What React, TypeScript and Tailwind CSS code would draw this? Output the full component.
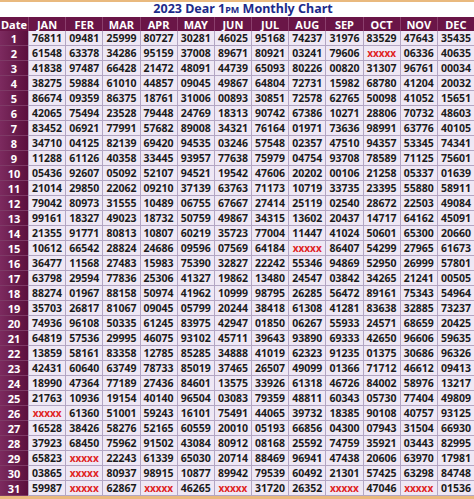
const months = ['JAN', 'FER', 'MAR', 'APR', 'MAY', 'JUN', 'JUL', 'AUG', 'SEP', 'OCT', 'NOV', 'DEC']

const rows = [
  '76811 09481 25999 80727 30281 46025 95168 74237 31976 83529 47643 35435',
  '61548 63378 34286 95159 37008 89671 80921 03241 79606 xxxxx 06336 40635',
  '41838 97487 66428 21472 48091 44739 65093 80226 00820 31307 96761 00034',
  '38275 59884 61010 44857 09045 49867 64804 72731 15982 68780 41204 20032',
  '86674 09359 86375 18761 31006 00893 30851 72578 62765 50098 41052 15651',
  '42065 75494 23528 79448 24769 18313 90742 67386 10271 28806 70732 48603',
  '83452 06921 77991 57682 89008 34321 76164 01971 73636 98991 63776 40105',
  '34710 04125 82139 69420 94535 03246 57548 02357 47510 94357 53345 74341',
  '11288 61126 40358 33445 93957 77638 75979 04754 93708 78589 71125 75601',
  '05436 92607 05092 52107 94521 19542 47606 20202 00106 21258 05337 01639',
  '21014 29850 22062 09210 37139 63763 71173 10719 33735 23395 55880 58911',
  '79042 80973 31555 10489 06755 67667 27414 25119 02540 28672 22503 49084',
  '99161 18327 49023 18732 50759 49867 34315 13602 20437 14717 64162 45091',
  '21355 91771 80813 10807 60219 35723 77004 11447 41024 50601 65300 20660',
  '10612 66542 28824 24686 09596 07569 64184 xxxxx 86407 54299 27965 61673',
  '36477 11568 27483 15983 75390 32827 22242 55346 94869 52950 26999 57801',
  '63798 29594 77836 25306 41327 19862 13480 24547 03842 34265 21241 00505',
  '88274 01967 88158 50974 41962 10999 98795 26285 56472 89161 75343 54964',
  '35703 26817 81067 09045 05799 20244 38418 61308 41281 83638 32885 73237',
  '74936 96108 50335 61245 83975 42947 01850 06267 55933 24571 68659 20425',
  '64819 57536 29995 46075 93102 45711 39643 93890 69333 42650 96606 59635',
  '13859 58161 83358 12785 85285 34888 41019 62323 91235 01375 30686 96326',
  '42431 60640 63749 78733 85019 37465 26507 49099 01366 71712 46612 09413',
  '18990 47364 77189 27436 84601 13575 33926 61318 46726 84002 58976 13217',
  '21763 10936 19154 40140 96504 03083 79359 48811 60343 05730 77404 49809',
  'xxxxx 61360 51001 59243 16101 75491 44065 39732 18385 90108 40757 93125',
  '16528 38426 58276 52165 60559 20010 05193 66856 04300 07943 31504 66930',
  '37923 68450 75962 91502 43084 80912 08168 25592 74759 35921 03443 82995',
  '65823 xxxxx 22243 61339 65030 20714 88469 96941 47438 20606 63970 17981',
  '03865 xxxxx 80937 98915 10877 89942 79539 60492 21301 57425 63298 84748',
  '59987 xxxxx 62867 xxxxx 46265 xxxxx 31720 26352 xxxxx 47046 xxxxx 01536',
].map((r) => r.split(' '))

export default function App() {
  return (
    <div
      className="w-[474px] h-[499px] overflow-hidden bg-[#e9b97e] flex flex-col"
      style={{ fontFamily: '"Noto Sans", "Open Sans", sans-serif' }}
    >
      {/* title */}
      <div className="mt-[2px] h-[15px] bg-white flex items-center justify-center">
        <span className="text-[12.5px] leading-[12px] font-bold text-[#1c2a8a] pl-[12px]">
          2023 Dear 1<span className="text-[9px]">PM</span> Monthly Chart
        </span>
      </div>

      {/* header */}
      <div className="grid grid-cols-[28px_repeat(12,1fr)] h-[14px] bg-[#6a1547] text-white text-[11px] font-bold leading-none">
        <div className="flex items-center justify-center">Date</div>
        {months.map((m) => (
          <div key={m} className="flex items-center justify-center border-l border-[#8a3e6c]">
            {m}
          </div>
        ))}
      </div>

      {/* rows */}
      <div className="flex flex-col">
        {rows.map((row, i) => (
          <div key={i} className="grid grid-cols-[28px_repeat(12,1fr)] h-[15px]">
            <div className="flex items-center justify-center bg-gradient-to-r from-[#7c2a5f] to-[#5b0f3d] text-white text-[11px] font-bold leading-none border-b border-[#7d3a66]">
              {i + 1}
            </div>
            {row.map((v, j) => (
              <div
                key={j}
                className="flex items-center justify-center bg-[#efe8f5] border-l border-b border-[#b3a6c4] text-[10.5px] font-bold leading-none"
              >
                {v === 'xxxxx' ? (
                  <span className="text-[#e0231f] text-[10px]">xxxxx</span>
                ) : (
                  <span className="text-[#1b1b1b]">{v}</span>
                )}
              </div>
            ))}
          </div>
        ))}
      </div>
    </div>
  )
}
